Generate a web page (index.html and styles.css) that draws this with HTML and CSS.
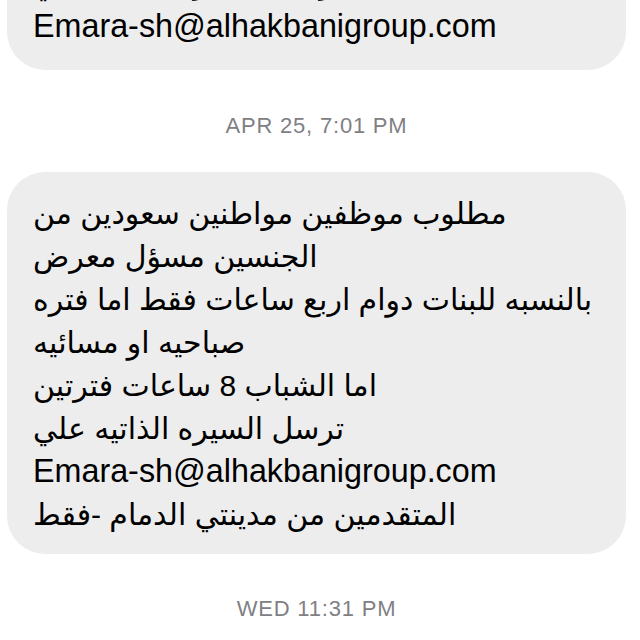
FILE: index.html
```html
<!DOCTYPE html>
<html>
<head>
<meta charset="utf-8">
<link rel="stylesheet" href="styles.css">
</head>
<body>
<div class="thread">
  <div class="bubble bubble-top">
    <div class="line" dir="rtl">ترسل السيره الذاتيه علي</div>
    <div class="line latin">Emara-sh@alhakbanigroup.com</div>
  </div>
  <div class="stamp">APR 25, 7:01 PM</div>
  <div class="bubble">
    <div class="line" dir="rtl">مطلوب موظفين مواطنين سعودين من</div>
    <div class="line" dir="rtl">الجنسين مسؤل معرض</div>
    <div class="line" dir="rtl">بالنسبه للبنات دوام اربع ساعات فقط اما فتره</div>
    <div class="line" dir="rtl">صباحيه او مسائيه</div>
    <div class="line" dir="rtl">اما الشباب 8 ساعات فترتين</div>
    <div class="line" dir="rtl">ترسل السيره الذاتيه علي</div>
    <div class="line latin">Emara-sh@alhakbanigroup.com</div>
    <div class="line" dir="rtl">المتقدمين من مدينتي الدمام -فقط</div>
  </div>
  <div class="stamp stamp-bottom">WED 11:31 PM</div>
</div>
</body>
</html>
```
FILE: styles.css
```css
html, body {
  margin: 0;
  padding: 0;
  background: #ffffff;
}
body {
  width: 640px;
  height: 640px;
  overflow: hidden;
  font-family: "Liberation Sans", "DejaVu Sans", sans-serif;
  color: #000;
}
.thread {
  display: flex;
  flex-direction: column;
  padding: 0 14px 0 7px;
}
.bubble {
  background: #ededed;
  border-radius: 38px;
  padding: 20px 20px 18px 26px;
  display: flex;
  flex-direction: column;
}
.bubble-top {
  margin-top: -58px;
  padding-bottom: 22px;
}
.line {
  font-size: 30px;
  line-height: 43px;
  text-align: left;
  white-space: nowrap;
}
.latin {
  font-size: 32.3px;
}
.stamp {
  text-align: center;
  color: #808084;
  font-size: 22px;
  letter-spacing: 0.8px;
  padding: 43px 0 33px;
}
.stamp-bottom {
  padding-top: 42px;
}
```
